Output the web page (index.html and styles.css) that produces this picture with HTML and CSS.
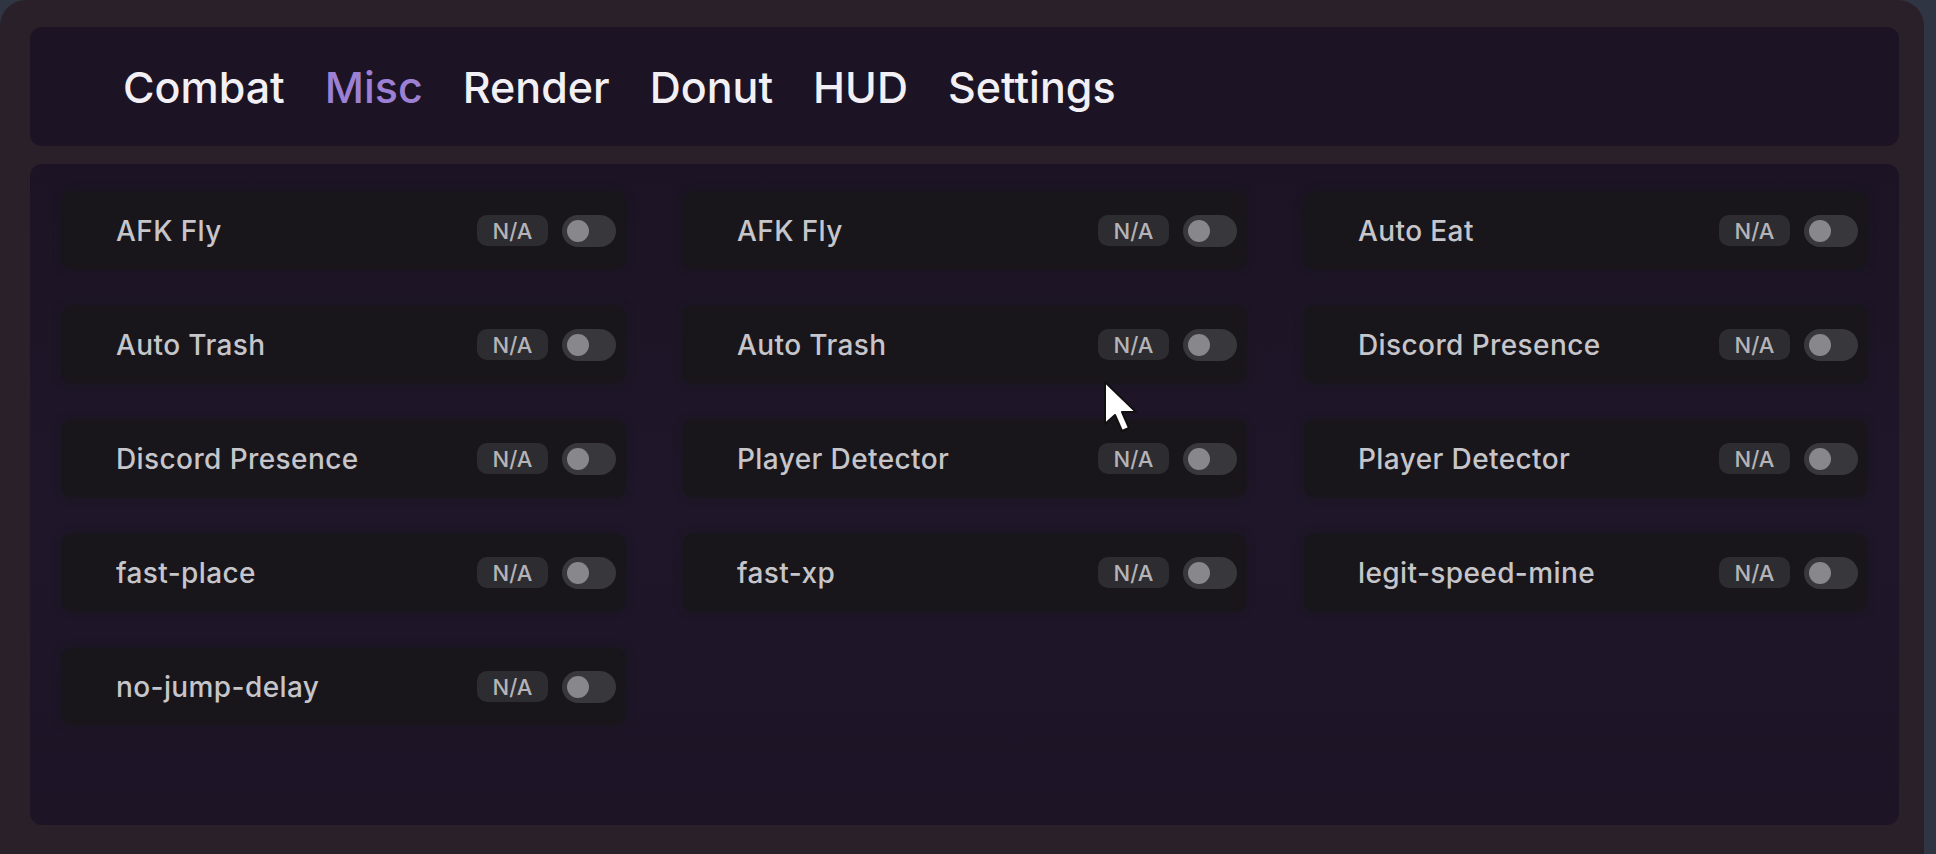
FILE: index.html
```html
<!DOCTYPE html>
<html>
<head>
<meta charset="utf-8">
<link rel="stylesheet" href="styles.css">
</head>
<body>
<div class="frame">
  <nav class="tabbar">
    <span class="tab">Combat</span>
    <span class="tab active">Misc</span>
    <span class="tab">Render</span>
    <span class="tab">Donut</span>
    <span class="tab">HUD</span>
    <span class="tab">Settings</span>
  </nav>
  <main class="panel">
    <div class="grid">
      <div class="card"><span class="label">AFK Fly</span><span class="badge">N/A</span><span class="toggle"><span class="knob"></span></span></div>
      <div class="card"><span class="label">AFK Fly</span><span class="badge">N/A</span><span class="toggle"><span class="knob"></span></span></div>
      <div class="card"><span class="label">Auto Eat</span><span class="badge">N/A</span><span class="toggle"><span class="knob"></span></span></div>
      <div class="card"><span class="label">Auto Trash</span><span class="badge">N/A</span><span class="toggle"><span class="knob"></span></span></div>
      <div class="card"><span class="label">Auto Trash</span><span class="badge">N/A</span><span class="toggle"><span class="knob"></span></span></div>
      <div class="card"><span class="label">Discord Presence</span><span class="badge">N/A</span><span class="toggle"><span class="knob"></span></span></div>
      <div class="card"><span class="label">Discord Presence</span><span class="badge">N/A</span><span class="toggle"><span class="knob"></span></span></div>
      <div class="card"><span class="label">Player Detector</span><span class="badge">N/A</span><span class="toggle"><span class="knob"></span></span></div>
      <div class="card"><span class="label">Player Detector</span><span class="badge">N/A</span><span class="toggle"><span class="knob"></span></span></div>
      <div class="card"><span class="label">fast-place</span><span class="badge">N/A</span><span class="toggle"><span class="knob"></span></span></div>
      <div class="card"><span class="label">fast-xp</span><span class="badge">N/A</span><span class="toggle"><span class="knob"></span></span></div>
      <div class="card"><span class="label">legit-speed-mine</span><span class="badge">N/A</span><span class="toggle"><span class="knob"></span></span></div>
      <div class="card"><span class="label">no-jump-delay</span><span class="badge">N/A</span><span class="toggle"><span class="knob"></span></span></div>
    </div>
  </main>
</div>
<svg class="cursor" width="38" height="54" viewBox="0 0 38 54">
  <path d="M3 2 L3 44 L13 35 L20 51 L27 48 L20 32 L34 32 Z" fill="#ffffff" stroke="#111" stroke-width="2" stroke-linejoin="round"/>
</svg>
</body>
</html>
```

FILE: styles.css
```css
html, body {
  margin: 0;
  padding: 0;
}
body {
  width: 1936px;
  height: 854px;
  overflow: hidden;
  background: #2f3542;
  font-family: "Inter", "Liberation Sans", sans-serif;
  position: relative;
}
.frame {
  box-sizing: border-box;
  width: 1924px;
  height: 880px;
  background: #2a2029;
  border-radius: 26px;
  padding: 27px 25px 0 30px;
}
.tabbar {
  box-sizing: border-box;
  height: 119px;
  background: #1c1424;
  border-radius: 12px;
  display: flex;
  align-items: center;
  gap: 40px;
  padding-left: 93px;
}
.tab {
  font-size: 43px;
  font-weight: 500;
  color: #f2f0f4;
}
.tab.active {
  color: #9c80d4;
}
.panel {
  box-sizing: border-box;
  margin-top: 18px;
  height: 661px;
  background: linear-gradient(180deg, #1c1424 0%, #1f1729 50%, #1d1526 100%);
  border-radius: 12px;
  padding: 28px 35px 0 32px;
}
.grid {
  display: grid;
  grid-template-columns: repeat(3, 563px);
  grid-auto-rows: 77px;
  column-gap: 58px;
  row-gap: 37px;
}
.card {
  background: #18161b;
  border-radius: 10px;
  display: flex;
  align-items: center;
  padding: 0 9px 0 54px;
  box-shadow: 0 0 6px 2px rgba(24, 22, 27, 0.6);
}
.label {
  flex: 1;
  font-size: 28px;
  font-weight: 500;
  letter-spacing: 0.4px;
  color: #c6c5ca;
}
.badge {
  box-sizing: border-box;
  width: 71px;
  height: 31px;
  border-radius: 10px;
  background: #2d2c30;
  color: #b4b3b7;
  font-size: 22px;
  font-weight: 500;
  display: flex;
  align-items: center;
  justify-content: center;
  margin-right: 14px;
}
.toggle {
  box-sizing: border-box;
  width: 54px;
  height: 32px;
  border-radius: 16px;
  background: #38373b;
  display: flex;
  align-items: center;
  padding-left: 5px;
}
.knob {
  width: 22px;
  height: 22px;
  border-radius: 50%;
  background: #88878b;
}
.cursor {
  position: absolute;
  left: 1102px;
  top: 380px;
}
```
